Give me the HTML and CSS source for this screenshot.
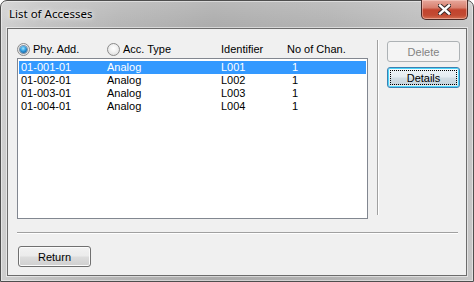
FILE: index.html
```html
<!DOCTYPE html>
<html>
<head>
<meta charset="utf-8">
<title>List of Accesses</title>
<link rel="stylesheet" href="styles.css">
</head>
<body>
<div class="window">
  <div class="titlebar">
    <span class="title">List of Accesses</span>
    <button class="close" aria-label="Close">
      <svg width="13" height="11" viewBox="0 0 13 11">
        <path d="M2 1.5 L11 9.5 M11 1.5 L2 9.5" stroke="#3a2a28" stroke-width="4.4" stroke-linecap="square" fill="none"/>
        <path d="M2 1.5 L11 9.5 M11 1.5 L2 9.5" stroke="#ffffff" stroke-width="2.4" stroke-linecap="square" fill="none"/>
      </svg>
    </button>
  </div>
  <div class="client">
    <div class="main">
      <div class="left">
        <div class="header">
          <label class="opt"><span class="radio checked"></span>Phy. Add.</label>
          <label class="opt"><span class="radio"></span>Acc. Type</label>
          <span class="col-title">Identifier</span>
          <span class="col-title">No of Chan.</span>
        </div>
        <div class="listbox">
          <div class="row selected"><span>01-001-01</span><span>Analog</span><span>L001</span><span>1</span></div>
          <div class="row"><span>01-002-01</span><span>Analog</span><span>L002</span><span>1</span></div>
          <div class="row"><span>01-003-01</span><span>Analog</span><span>L003</span><span>1</span></div>
          <div class="row"><span>01-004-01</span><span>Analog</span><span>L004</span><span>1</span></div>
        </div>
      </div>
      <div class="vsep"></div>
      <div class="right">
        <button class="btn disabled" disabled>Delete</button>
        <button class="btn default">Details</button>
      </div>
    </div>
    <div class="hsep"></div>
    <div class="footer">
      <button class="btn">Return</button>
    </div>
  </div>
</div>
</body>
</html>
```

FILE: styles.css
```css
html, body {
  margin: 0;
  padding: 0;
  background: #ffffff;
}

body {
  width: 474px;
  height: 282px;
  overflow: hidden;
  font-family: "Liberation Sans", Arial, sans-serif;
  font-size: 11px;
  color: #000;
}

.window {
  box-sizing: border-box;
  width: 474px;
  height: 282px;
  border: 1px solid #4e4e4e;
  border-radius: 7px 7px 0 0;
  background:
    linear-gradient(to bottom, rgba(255,255,255,0.18), rgba(255,255,255,0) 30px),
    linear-gradient(to right, #cfcfcf 0%, #c2c2c2 8%, #b4b4b4 25%, #aaaaaa 45%, #b1b1b1 70%, #bdbdbd 90%, #c6c6c6 100%);
  padding: 0 6px 5px 6px;
  display: flex;
  flex-direction: column;
  box-shadow: inset 0 0 0 1px rgba(255,255,255,0.45);
}

.titlebar {
  height: 27px;
  display: flex;
  align-items: flex-start;
  flex: none;
}

.title {
  font-family: "Segoe UI", "Noto Sans", sans-serif;
  font-size: 11.5px;
  line-height: 14px;
  margin-top: 6px;
  margin-left: 2px;
  color: #000;
  text-shadow: 0 0 6px #ffffff, 0 0 3px rgba(255,255,255,0.9);
}

.close {
  margin-left: auto;
  margin-top: -1px;
  margin-right: -1px;
  width: 47px;
  height: 20px;
  padding: 0;
  border: 1px solid #4a2a26;
  border-top: none;
  border-radius: 0 0 5px 5px;
  background: linear-gradient(to bottom, #e7a89c 0%, #d8806f 40%, #c2442e 52%, #c24a32 80%, #d46f52 100%);
  box-shadow: inset 0 0 0 1px rgba(255,220,210,0.45);
  display: flex;
  align-items: center;
  justify-content: center;
}

.client {
  flex: 1;
  border: 1px solid #6c6c6c;
  background: #f0f0f0;
  display: flex;
  flex-direction: column;
  box-shadow: 0 0 0 1px rgba(255,255,255,0.5);
}

.main {
  height: 179px;
  padding: 11px 0 0 9px;
  display: flex;
  align-items: flex-start;
}

.left {
  width: 351px;
}

.header {
  height: 18px;
  display: grid;
  grid-template-columns: 90px 114px 66px auto;
  align-items: center;
}

.opt {
  display: flex;
  align-items: center;
  gap: 3px;
  line-height: 13px;
}

.col-title {
  line-height: 13px;
}

.radio {
  box-sizing: border-box;
  width: 13px;
  height: 13px;
  border-radius: 50%;
  border: 1px solid #8a8a8a;
  background: radial-gradient(circle at 50% 40%, #ffffff 0%, #f2f2f2 40%, #d6d6d6 100%);
  display: flex;
  align-items: center;
  justify-content: center;
  flex: none;
}

.radio.checked::after {
  content: "";
  width: 7px;
  height: 7px;
  border-radius: 50%;
  background: radial-gradient(circle at 45% 35%, #9ee6ff 0%, #2f9ade 45%, #135f9e 80%, #0c3f6e 100%);
  box-shadow: 0 0 0 1px rgba(30,70,110,0.55);
}

.listbox {
  box-sizing: border-box;
  height: 161px;
  border: 1px solid #828790;
  background: #ffffff;
  padding: 2px 1px 1px 1px;
}

.row {
  display: grid;
  grid-template-columns: 86px 114px 71px auto;
  height: 13px;
  line-height: 13px;
  padding-left: 2px;
  white-space: nowrap;
}

.row.selected {
  background: #3399ff;
  color: #ffffff;
}

.vsep {
  width: 0;
  height: 175px;
  margin-left: 9px;
  border-left: 1px solid #a0a0a0;
  border-right: 1px solid #ffffff;
}

.right {
  margin-left: 8px;
  padding-top: 1px;
  display: flex;
  flex-direction: column;
  gap: 5px;
}

.btn {
  box-sizing: border-box;
  width: 73px;
  height: 21px;
  padding: 0;
  font-family: "Liberation Sans", Arial, sans-serif;
  font-size: 11px;
  color: #000;
  border: 1px solid #707070;
  border-radius: 3px;
  background: linear-gradient(to bottom, #f2f2f2 0%, #ebebeb 48%, #dddddd 52%, #cfcfcf 100%);
  box-shadow: inset 0 0 0 1px #fbfbfb;
}

.btn.disabled {
  border-color: #adb2b5;
  background: #f4f4f4;
  color: #838383;
  box-shadow: none;
}

.btn.default {
  border-color: #3c7fb1;
  box-shadow: inset 0 0 0 1px #4cd6fb, inset 0 0 0 2px rgba(255,255,255,0.5);
  background: linear-gradient(to bottom, #eef4f8 0%, #e4ecf1 48%, #d2dde4 52%, #c4d2db 100%);
  outline: 1px dotted #000;
  outline-offset: -4px;
}

.hsep {
  height: 0;
  margin: 13px 8px 0 9px;
  border-top: 1px solid #a0a0a0;
  border-bottom: 1px solid #ffffff;
}

.footer {
  padding: 12px 0 0 10px;
}
```
